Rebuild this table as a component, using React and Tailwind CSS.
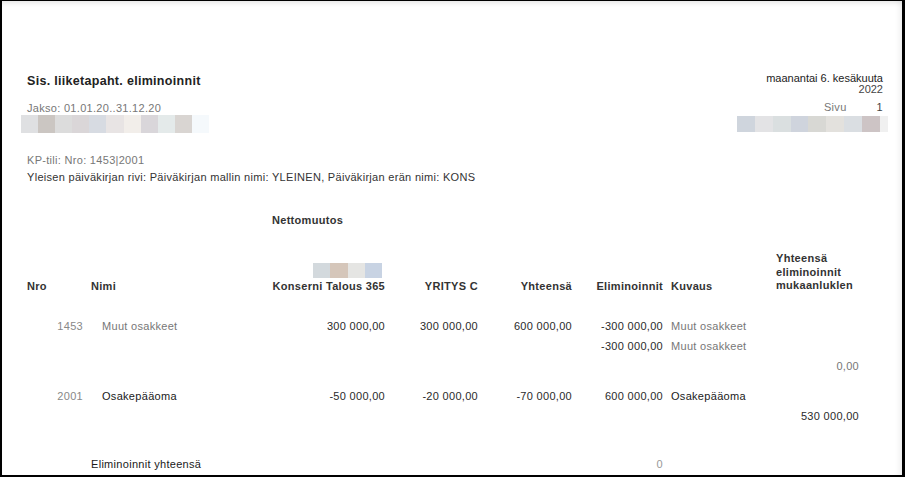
import React from "react";

const leftBlocks = ["#dfe0e2", "#cbc6c2", "#dcdcdc", "#dad6d8", "#d7dbe2", "#e8e4e4", "#f2eeea", "#d9d6da", "#e4eaea", "#d9d5d2", "#f5f9fc"];
const rightBlocks = ["#cfd5dd", "#e3e3e5", "#dadfe0", "#cfd4dd", "#d8d8d4", "#e3e1dd", "#dadee2", "#cdc4c5"];
const midBlocks = ["#d3d9dd", "#d5c6ba", "#e5e5e3", "#c8d3e3"];

const cols = "grid grid-cols-[64px_179px_115px_93px_94px_91px_113px_83px]";

function Row({ nro, nimi, dark, a, b, c, d, kuvaus, tot, className = "" }) {
  const nameColor = dark ? "text-[#1a1a1a]" : "text-[#777]";
  return (
    <div className={`${cols} h-[20px] leading-[20px] ${className}`}>
      <div className="text-right pr-2 text-[#888]">{nro}</div>
      <div className={`pl-[11px] ${nameColor}`}>{nimi}</div>
      <div className="text-right text-[#2a2a2a]">{a}</div>
      <div className="text-right text-[#2a2a2a]">{b}</div>
      <div className="text-right text-[#2a2a2a]">{c}</div>
      <div className="text-right text-[#2a2a2a]">{d}</div>
      <div className={`pl-2 whitespace-nowrap ${nameColor}`}>{kuvaus}</div>
      <div className={`text-right ${tot === "0,00" ? "text-[#777]" : "text-[#2a2a2a]"}`}>{tot}</div>
    </div>
  );
}

export default function App() {
  return (
    <div
      className="w-[905px] h-[477px] bg-white border-black border-t border-l-2 border-r-[3px] border-b-2 overflow-hidden shadow-[inset_0_5px_5px_-3px_rgba(0,0,0,0.10),inset_-6px_0_6px_-4px_rgba(0,0,0,0.08)] text-[11px] tracking-[0.3px]"
      style={{ fontFamily: '"Liberation Sans", Arial, sans-serif' }}
    >
      <div className="flex justify-between items-start pl-[25px] pr-[14px] pt-[72px]">
        <div className="flex flex-col">
          <div className="text-[12.5px] font-bold leading-[16px] text-[#222]">Sis. liiketapaht. eliminoinnit</div>
          <div className="mt-[12px] leading-[14px] text-[#777]">Jakso: 01.01.20..31.12.20</div>
          <div className="flex ml-[-6px] h-[18px]">
            {leftBlocks.map((c, i) => (
              <div key={i} className="w-[17.1px] h-full" style={{ background: c }} />
            ))}
          </div>
        </div>
        <div className="flex flex-col items-end">
          <div className="pr-[5px] text-right leading-[11px] tracking-normal text-[#222]">
            <div>maanantai 6. kesäkuuta</div>
            <div className="text-[#444]">2022</div>
          </div>
          <div className="mt-[5px] pr-[5px] leading-[14px] flex gap-[30px] text-[#777]">
            <span>Sivu</span>
            <span className="text-[#444]">1</span>
          </div>
          <div className="flex mt-[2px] h-[16px]">
            {rightBlocks.map((c, i) => (
              <div key={i} className="w-[17.8px] h-full" style={{ background: c }} />
            ))}
            <div className="w-[8.5px] h-full bg-[#f0f0f0]" />
          </div>
        </div>
      </div>

      <div className="pl-[25px]">
        <div className="mt-[20px] leading-[14px] text-[#777]">KP-tili: Nro: 1453|2001</div>
        <div className="mt-[3px] leading-[14px] text-[#333]">
          Yleisen päiväkirjan rivi: Päiväkirjan mallin nimi: YLEINEN, Päiväkirjan erän nimi: KONS
        </div>

        <div className={`${cols} mt-[29px] leading-[14px] font-bold text-[#333]`}>
          <div className="col-start-3 pl-[2px] whitespace-nowrap">Nettomuutos</div>
        </div>

        <div className={`${cols} mt-[25px] items-end font-bold text-[#333] leading-[14px]`}>
          <div>Nro</div>
          <div>Nimi</div>
          <div className="flex flex-col items-end">
            <div className="flex self-start ml-[43px] mb-[1px] h-[15px]">
              {midBlocks.map((c, i) => (
                <div key={i} className="w-[17.3px] h-full" style={{ background: c }} />
              ))}
            </div>
            <div className="whitespace-nowrap">Konserni Talous 365</div>
          </div>
          <div className="text-right">YRITYS C</div>
          <div className="text-right">Yhteensä</div>
          <div className="text-right">Eliminoinnit</div>
          <div className="pl-2">Kuvaus</div>
          <div className="leading-[13.5px] whitespace-nowrap">
            <div>Yhteensä</div>
            <div>eliminoinnit</div>
            <div>mukaanluklen</div>
          </div>
        </div>

        <Row className="mt-[23px]" nro="1453" nimi="Muut osakkeet" a="300 000,00" b="300 000,00" c="600 000,00" d="-300 000,00" kuvaus="Muut osakkeet" />
        <Row d="-300 000,00" kuvaus="Muut osakkeet" />
        <Row tot="0,00" />
        <Row className="mt-[10px]" nro="2001" nimi="Osakepääoma" dark a="-50 000,00" b="-20 000,00" c="-70 000,00" d="600 000,00" kuvaus="Osakepääoma" />
        <Row tot="530 000,00" />

        <div className={`${cols} mt-[28px] h-[20px] leading-[20px]`}>
          <div className="col-start-2 col-span-2 text-[#1a1a1a] whitespace-nowrap">Eliminoinnit yhteensä</div>
          <div className="col-start-6 text-right text-[#999]">0</div>
        </div>
      </div>
    </div>
  );
}
